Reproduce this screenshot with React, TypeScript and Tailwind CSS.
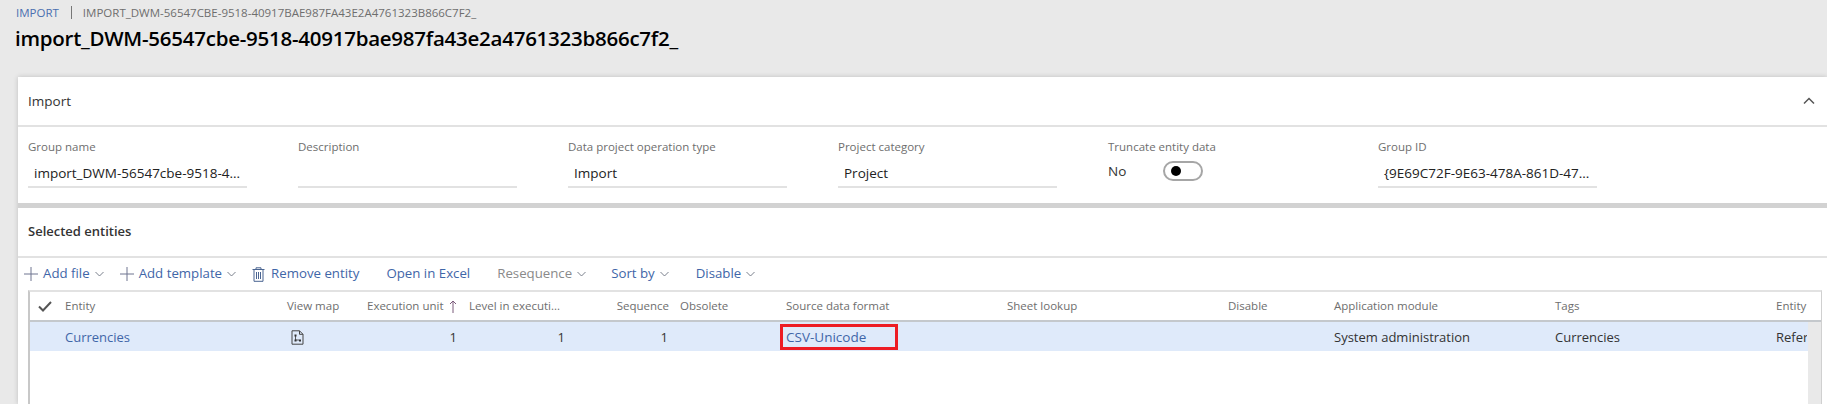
import React from "react";

const Chevron = ({ color = "#6b7280" }: { color?: string }) => (
  <svg width="9" height="6" viewBox="0 0 9 6" fill="none" className="shrink-0">
    <path d="M0.5 1 L4.5 5 L8.5 1" stroke={color} strokeWidth="0.9" />
  </svg>
);

const Plus = () => (
  <svg width="14" height="14" viewBox="0 0 14 14" className="shrink-0">
    <path d="M7 0 V14 M0 7 H14" stroke="#6f7590" strokeWidth="1" />
  </svg>
);

const Trash = () => (
  <svg width="13" height="15" viewBox="0 0 13 15" fill="none" className="shrink-0">
    <path d="M0.5 2.5 H12.5 M4 2.5 V0.8 H9 V2.5 M2 2.5 V14.3 H11 V2.5 M4.5 5 V12 M6.5 5 V12 M8.5 5 V12" stroke="#4a6491" strokeWidth="1" />
  </svg>
);

const ToolItem = ({ label, plus, trash, menu, disabled, className = "" }: { label: string; plus?: boolean; trash?: boolean; menu?: boolean; disabled?: boolean; className?: string }) => (
  <div className={`flex items-center ${className}`}>
    {plus && <span className="mr-[5px] flex"><Plus /></span>}
    {trash && <span className="mr-[6px] flex"><Trash /></span>}
    <span className={disabled ? "text-[#8a8a8a]" : "text-[#3f66a8]"}>{label}</span>
    {menu && <span className="ml-[5px] flex"><Chevron /></span>}
  </div>
);

const Field = ({ label, value }: { label: string; value: string }) => (
  <div className="w-[219px]">
    <div className="h-[18px] text-[11.5px] leading-[18px] text-[#6e6e6e]">{label}</div>
    <div className="mt-[6px] h-[26px] truncate border-b-2 border-[#e2e2e2] pl-[6px] text-[13.5px] leading-[22px] text-[#222]">{value}</div>
  </div>
);

const gridCols = "grid grid-cols-[35px_222px_80px_102px_105px_106px_106px_221px_221px_106px_221px_221px_31px]";

export default function App() {
  return (
    <div className="h-[404px] w-[1827px] overflow-hidden bg-[#e9e9e9] font-['Open_Sans','Noto_Sans',sans-serif]">
      <div className="flex h-[22px] items-end pl-[16px] text-[11.5px] leading-[18px]">
        <span className="text-[#4a6fb0]">IMPORT</span>
        <span className="ml-[12px] mr-[11px] mb-[3px] h-[13px] w-px bg-[#777]" />
        <span className="text-[#6e6e6e]">IMPORT_DWM-56547CBE-9518-40917BAE987FA43E2A4761323B866C7F2_</span>
      </div>
      <h1 className="ml-[15px] mt-[3px] h-[26px] text-[20.5px] font-semibold leading-[26px] tracking-[-0.25px] text-black">
        import_DWM-56547cbe-9518-40917bae987fa43e2a4761323b866c7f2_
      </h1>

      <div className="ml-[18px] mt-[26px] shadow-[0_0_5px_rgba(0,0,0,0.18)]">
        <section className="bg-white">
          <div className="flex h-[50px] items-center justify-between border-b-2 border-[#e2e2e2] pl-[10px] pr-[12px]">
            <span className="text-[13.5px] text-[#333]">Import</span>
            <svg width="12" height="8" viewBox="0 0 12 8" fill="none">
              <path d="M1 6.5 L6 1.5 L11 6.5" stroke="#555" strokeWidth="1.5" />
            </svg>
          </div>
          <div className="flex h-[76px] gap-[51px] pl-[10px] pt-[11px]">
            <Field label="Group name" value="import_DWM-56547cbe-9518-4..." />
            <Field label="Description" value="" />
            <Field label="Data project operation type" value="Import" />
            <Field label="Project category" value="Project" />
            <div className="w-[219px]">
              <div className="h-[18px] text-[11.5px] leading-[18px] text-[#6e6e6e]">Truncate entity data</div>
              <div className="mt-[5px] flex items-center">
                <span className="w-[55px] text-[13.5px] text-[#333]">No</span>
                <span className="flex h-[20px] w-[40px] items-center rounded-full border-2 border-[#a6a6a6] pl-[6px]">
                  <span className="h-[10px] w-[10px] rounded-full bg-black" />
                </span>
              </div>
            </div>
            <Field label="Group ID" value="{9E69C72F-9E63-478A-861D-47..." />
          </div>
        </section>

        <div className="h-[5px] bg-[#d2d2d2]" />

        <section className="h-[196px] bg-white">
          <div className="flex h-[50px] items-center border-b-2 border-[#e2e2e2] pl-[10px]">
            <span className="text-[13px] font-semibold text-[#333]">Selected entities</span>
          </div>
          <div className="flex h-[32px] items-center pl-[6px] text-[13.25px]">
            <ToolItem label="Add file" plus menu />
            <ToolItem label="Add template" plus menu className="ml-[16px]" />
            <ToolItem label="Remove entity" trash className="ml-[16px]" />
            <ToolItem label="Open in Excel" className="ml-[27px]" />
            <ToolItem label="Resequence" menu disabled className="ml-[27px]" />
            <ToolItem label="Sort by" menu className="ml-[25px]" />
            <ToolItem label="Disable" menu className="ml-[27px]" />
          </div>
          <div className="ml-[10px] mr-[5px] h-[130px] overflow-hidden border-l-2 border-r border-t-2 border-l-[#c8c8c8] border-r-[#d0d0d0] border-t-[#e2e2e2]">
            <div className={`${gridCols} h-[30px] items-center border-b-2 border-[#c4c8cc] text-[11.5px] text-[#6e6e6e]`}>
              <span className="flex justify-center pr-[6px]">
                <svg width="14" height="11" viewBox="0 0 14 11" fill="none">
                  <path d="M1 5.5 L5 9.5 L13 1" stroke="#555" strokeWidth="2" />
                </svg>
              </span>
              <span>Entity</span>
              <span>View map</span>
              <span className="flex items-center gap-[5px] whitespace-nowrap">
                Execution unit
                <svg width="8" height="13" viewBox="0 0 8 13" fill="none" className="shrink-0">
                  <path d="M4 13 V1 M1 4 L4 1 L7 4" stroke="#7b5a7b" strokeWidth="1" />
                </svg>
              </span>
              <span className="truncate">Level in executi...</span>
              <span className="pr-[11px] text-right">Sequence</span>
              <span>Obsolete</span>
              <span>Source data format</span>
              <span>Sheet lookup</span>
              <span>Disable</span>
              <span>Application module</span>
              <span>Tags</span>
              <span className="overflow-hidden whitespace-nowrap">Entity</span>
            </div>
            <div className="flex">
              <div className="w-[1778px] shrink-0">
                <div className={`${gridCols} h-[29px] items-center bg-[#dfeafa] text-[13px] text-[#333]`}>
                  <span />
                  <span className="pt-[2px] text-[#3f66a8]">Currencies</span>
                  <span className="pl-[4px] pt-[2px]">
                    <svg width="13" height="15" viewBox="0 0 13 15" fill="none">
                      <path d="M1 0.8 H8.5 L12 4.3 V14.2 H1 Z M8.5 0.8 V4.3 H12" stroke="#444" strokeWidth="1" />
                      <rect x="3.5" y="4.5" width="2" height="2" fill="#333" />
                      <rect x="3.5" y="9.5" width="2" height="2" fill="#333" />
                      <rect x="8" y="9.5" width="2" height="2" fill="#333" />
                      <path d="M4.5 6 V10 H8" stroke="#333" strokeWidth="0.8" />
                    </svg>
                  </span>
                  <span className="pr-[12px] pt-[2px] text-right">1</span>
                  <span className="pr-[9px] pt-[2px] text-right">1</span>
                  <span className="pr-[12px] pt-[2px] text-right">1</span>
                  <span />
                  <span>
                    <span className="-ml-[6px] block h-[26px] w-[118px] border-[3px] border-[#ed1c24] pl-[3px] text-[13.5px] leading-[21px] text-[#3f66a8]">CSV-Unicode</span>
                  </span>
                  <span />
                  <span />
                  <span className="whitespace-nowrap pt-[2px]">System administration</span>
                  <span className="pt-[2px]">Currencies</span>
                  <span className="overflow-hidden whitespace-nowrap pt-[2px]">Reference</span>
                </div>
              </div>
              <div className="h-[100px] w-[15px] shrink-0 bg-[#e9e9e9]" />
            </div>
          </div>
        </section>
      </div>
    </div>
  );
}
